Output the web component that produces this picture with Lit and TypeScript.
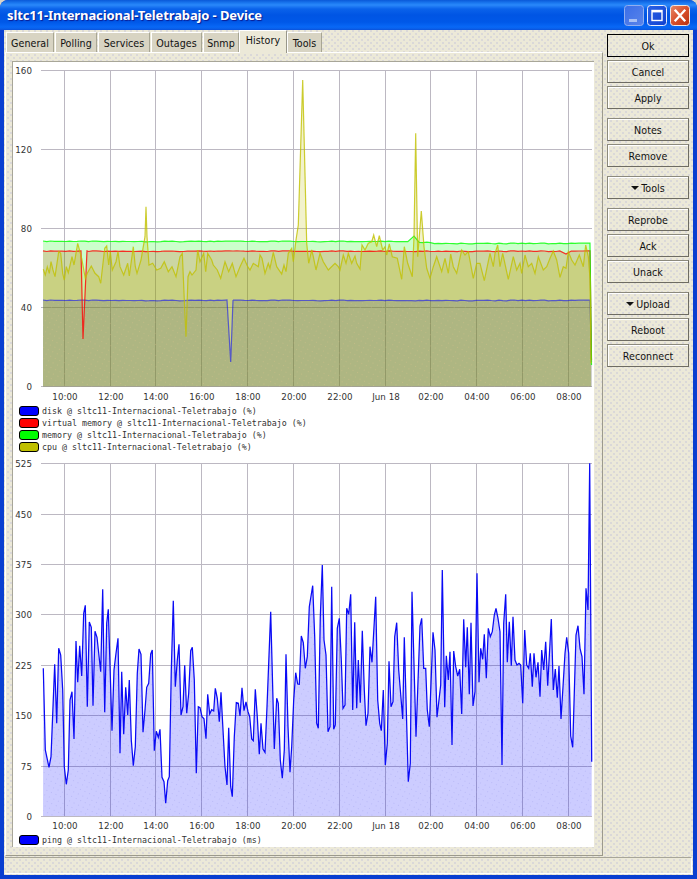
import { LitElement, html, css, svg } from "lit";
import { customElement } from "lit/decorators.js";

type P = [number, number];
const map = (a: number[], ox: number, oy: number): P[] => {
  const r: P[] = [];
  for (let i = 0; i < a.length; i += 2) r.push([ox + a[i] / 3, oy + a[i + 1] / 3]);
  return r;
};
const str = (p: P[]) => p.map(([x, y]) => `${x.toFixed(1)},${y.toFixed(1)}`).join(" ");

const ping: P[] = [
  ...map([40,325,46,570,57,622,63,590,74,313,80,490,86,265,92,285,98,390,103,620,109,673,115,630,120,420,126,395,132,537,138,243,143,367,149,257,155,348,161,160,166,136,172,440,178,186,184,202,189,437,195,214,201,232,212,335,218,88,224,457,230,190,235,148,246,512,252,330,258,280,264,235,270,580,275,335,281,523,287,382,293,465,298,360,304,540,310,617,316,560,322,340,327,267,333,283,339,517,345,450,350,382,356,370,362,282,367,270,373,572,379,514,385,532,390,508,396,652,402,665,407,730,413,662,418,650,424,330,430,122,436,380,442,300,447,253,453,465,459,440,464,316,470,460,476,400,482,272,487,262,493,360,499,640,505,440,510,443,516,470,522,476,528,536,533,403,539,462,545,449,551,453,556,385,562,415,568,485,573,397,579,510,585,620,591,675,596,503,602,680,607,710,613,530,619,428,625,430,630,468,636,383,642,452,648,426,654,455,659,470,665,537,670,542,676,388,682,470,688,583,693,490,699,567,705,577,711,440,722,155,733,567,740,415,745,430,751,600,757,655,763,570,768,283,774,500,780,637,785,560,791,420,797,338,803,372,808,373,814,228,820,248,826,325,832,290,838,140], 30, 560),
  ...map([8,377,14,530,20,790,25,805,31,470,37,315,42,540,48,585,54,815,60,800,65,380,71,808,76,795,82,505,88,475,94,600,99,745,105,735,110,445,116,463,122,403,128,750,134,487,140,745,145,600,151,728,157,512,163,690,168,797,174,760,180,560,186,607,197,410,203,720,209,790,214,812,220,690,226,915,232,850,237,604,243,740,249,725,254,530,260,488,266,630,278,777,283,532,295,965,301,910,306,395,318,830,330,498,335,475,341,625,347,625,352,750,358,800,369,517,375,570,381,772,392,675,397,330,404,742,409,587,415,660,420,575,426,855,431,573,437,620,443,648,449,628,455,762,461,478,467,622,472,502,478,703,483,488,489,738,495,695,501,340,507,667,512,565,518,598,523,523,529,655,535,505,541,530,547,515,553,465,558,445,564,475,570,515,576,915,581,490,587,403,592,607,598,485,604,617,609,470,615,600,621,615,627,610,632,615,638,730,644,510,650,615,656,625,661,580,667,680,672,580,678,652,684,607,690,710,695,570,701,630,707,545,713,677,724,477,730,690,736,627,742,713,747,618,753,777,759,680,765,580,770,532,776,580,782,828,788,862,798,525,804,497,810,565,816,590,822,703,828,385,834,450,839,10,845,905], 310, 460),
];

const cpu: P[] = [
  ...map([40,118,46,135,52,110,58,130,63,95,69,120,75,140,86,65,92,70,98,130,103,150,109,110,115,128,126,80,132,105,143,40,155,85,166,145,172,130,184,108,195,130,206,140,212,160,224,55,230,48,236,105,241,65,247,120,258,95,264,65,270,110,281,135,293,100,298,138,310,50,316,110,321,130,333,90,345,20,348,-70,351,20,357,105,368,100,380,120,392,115,403,95,415,125,426,110,438,140,450,80,457,70,463,210,468,320,474,140,480,125,486,135,498,120,503,60,510,95,521,70,527,125,533,70,545,90,550,105,562,120,572,145,585,95,596,125,607,100,618,140,630,110,642,85,653,110,660,120,670,100,685,110], 30, 230),
  ...map([0,555,6,565,15,610,25,580,30,595,40,547,50,590,65,612,72,585,78,605,85,550,95,535,100,575,108,510,115,465,128,30,140,520,146,580,155,540,160,560,168,600,180,550,190,575,205,600,225,580,235,590,240,600,250,555,258,580,265,550,275,580,285,558,290,580,300,597,306,525,315,540,325,520,335,515,341,495,350,530,358,497,368,540,375,530,380,555,388,522,397,560,412,565,425,628,433,530,443,580,457,620,462,500,467,190,473,560,484,423,492,530,500,595,510,625,520,590,530,560,545,605,555,565,565,610,572,552,580,590,590,610,605,540,615,555,625,545,640,625,650,580,660,580,673,632,690,550,700,590,705,550,713,525,720,590,728,550,745,628,760,560,770,600,780,580,785,610,795,555,805,590,815,580,825,610,835,560,850,600,860,590,870,565,880,543,890,570,900,622,910,590,918,595,925,545,935,570,945,585,958,555,970,590,977,525,985,560,990,625,993,880], 260, 70),
];

const jitter = (i: number) => (Math.sin(i * 12.9898) * 43758.5453) % 1;
const flat = (fn: (x: number) => number, dips: P[], endY: number): P[] => {
  const r: P[] = [];
  let i = 0;
  for (let x = 43; x < 590; x += 3.8) {
    const d = dips.find(([a]) => Math.abs(a - x) < 3.5);
    if (!d) r.push([x, fn(x) + Math.abs(jitter(i)) * 0.8]);
    i++;
  }
  for (const d of dips) r.push(d);
  r.sort((a, b) => a[0] - b[0]);
  r.push([590, fn(589)], [591.5, endY]);
  return r;
};
const withDip = (x1: number, x2: number, x3: number, y: number, base: number, pts: P[]): P[] => {
  const out = pts.filter(([x]) => x < x1 || x > x3);
  out.push([x1, base], [x2, y], [x3, base]);
  return out.sort((a, b) => a[0] - b[0]);
};

const memory = flat((x) => (x < 413 ? 241 : x < 432 ? 242 : 243), [[414, 236]], 365);
const vmem = withDip(81, 83, 87, 339, 250.8, flat(() => 250.8, [[566, 254]], 360));
const disk = withDip(227, 230.7, 233, 362, 300, flat(() => 300, [], 362));

const BASE1 = 386.5;
const BASE2 = 816;
const VX = [65, 111, 156, 202, 248, 294, 340, 386, 431, 477, 523, 569];
const XL = ["10:00", "12:00", "14:00", "16:00", "18:00", "20:00", "22:00", "Jun 18", "02:00", "04:00", "06:00", "08:00"];

const area = (p: P[], base: number) => `43,${base} ${str(p)} ${p[p.length - 1][0].toFixed(1)},${base}`;

const grid = (ys: [string, number][], top: number, base: number, labelY: number) => svg`
  ${ys.map(([, y]) => svg`<line class="g" x1="41" x2="592" y1=${y + 0.5} y2=${y + 0.5}></line>`)}
  ${VX.map((x) => svg`<line class="g" x1=${x - 0.5} x2=${x - 0.5} y1=${top} y2=${base}></line>`)}
  ${ys.map(([t, y]) => svg`<text class="t" x="32" y=${y + 3.5} text-anchor="end">${t}</text>`)}
  ${XL.map((t, i) => svg`<text class="t" x=${VX[i]} y=${labelY} text-anchor="middle">${t}</text>`)}`;

const series: [string, P[]][] = [["#0000ff", disk], ["#ff0000", vmem], ["#00ff00", memory], ["#c0c000", cpu]];

const groups = [["Ok", "Cancel", "Apply"], ["Notes", "Remove"], ["▾Tools"], ["Reprobe", "Ack", "Unack"], ["▾Upload", "Reboot", "Reconnect"]];
const tabs = ["General", "Polling", "Services", "Outages", "Snmp", "History", "Tools"];

@customElement("app-root")
export class AppRoot extends LitElement {
  static styles = css`
    :host { display: block; width: 697px; height: 879px; background: #d8d4c8; font-family: "DejaVu Sans Condensed", "DejaVu Sans", sans-serif; font-stretch: condensed; font-size: 10.6px; letter-spacing: .05px; color: #111; overflow: hidden; }
    .win { height: 879px; box-sizing: border-box; display: flex; flex-direction: column; border-radius: 8px 8px 0 0; overflow: hidden; background: #0a3fd0; }
    .title { height: 30px; flex: none; display: flex; align-items: center; padding: 0 7px; gap: 3px;
      background: linear-gradient(180deg, #0a58d8 0, #1a78f0 3px, #2a88fa 5px, #0a62ea 9px, #0055e4 15px, #0058e8 22px, #0868f6 27px, #0a5ee8 29px, #0a4fd8 30px); }
    .ttext { flex: 1; color: #fff; font: bold 13px "Noto Sans", sans-serif; letter-spacing: -.12px; text-shadow: 1px 1px 1px #0a1a90; white-space: nowrap; }
    .wb { width: 20px; height: 21px; margin-top: 1px; display: block; }
    .body { flex: 1; margin: 0 4px; display: grid; grid-template-columns: 598px 82px; column-gap: 4px; padding-left: 1px; background-color: #ece9d8;
      background-image: radial-gradient(circle at 1px 1px, rgba(170,170,215,.28) .7px, transparent 1px), radial-gradient(circle at 4px 4px, rgba(170,170,215,.28) .7px, transparent 1px);
      background-size: 6px 6px; min-height: 0; }
    .left { display: flex; flex-direction: column; }
    .tabs { height: 23px; display: grid; grid-template-columns: 49px 43px 53px 52px 37px 47px 36px; align-items: end; position: relative; z-index: 1; margin-left: 1px; }
    .tab { height: 20px; box-sizing: border-box; background: #d8d4c3; border-top: 1px solid #fff; border-left: 1px solid #fff; border-right: 1px solid #a8a694; text-align: center; line-height: 20px; margin-right: 1px; margin-bottom: 1px; }
    .tab.on { height: 23px; background: #ece9d8; line-height: 19px; margin-bottom: 0; margin-right: 0; margin-left: -1px; border-right-color: #98968a; }
    .panel { height: 804px; box-sizing: border-box; margin-top: -1px; border-top: 1px solid #fff; border-left: 1px solid #fff; border-right: 1px solid #9c9a8c; border-bottom: 1px solid #9c9a8c; padding: 8px 8px 8px 6px; }
    .chart { height: 786px; box-sizing: border-box; background: #fff; border-top: 1px solid #a8a698; border-left: 1px solid #a8a698; display: flex; flex-direction: column; }
    svg.plot { display: block; flex: none; width: 580px; }
    .p1 { height: 343px; }
    .p2 { height: 381px; }
    .g { stroke: #bcb8c2; stroke-width: 1; }
    .t { font: 8.7px "DejaVu Sans", sans-serif; fill: #333; }
    .legend { margin-left: 6px; }
    .row { height: 12px; display: flex; align-items: center; gap: 3px; font: 8.3px/12px "DejaVu Sans Mono", monospace; font-stretch: normal; letter-spacing: 0; color: #333; white-space: pre; }
    .sw { width: 18px; height: 8px; border: 1px solid #000; border-radius: 3px; flex: none; }
    .blue { background: #0000ff; } .red { background: #ff0000; } .green { background: #00ff00; } .olive { background: #c0c000; }
    .side { padding-top: 4px; display: flex; flex-direction: column; gap: 9px; }
    .grp { display: flex; flex-direction: column; gap: 3px; }
    .btn { height: 23px; box-sizing: border-box; border: 1px solid #8c8a7c; border-right-color: #6e6c62; border-bottom-color: #6e6c62; box-shadow: inset 1px 1px #fff; display: flex; align-items: center; justify-content: center; gap: 2px; }
    .btn.def { border: 1px solid #000; box-shadow: none; }
    .tri { width: 8px; height: 4px; display: block; }
    .wrapfoot { flex: none; margin: 0 4px 4px; padding-left: 1px; height: 19px; background-color: #ece9d8;
      background-image: radial-gradient(circle at 1px 1px, rgba(170,170,215,.28) .7px, transparent 1px), radial-gradient(circle at 4px 4px, rgba(170,170,215,.28) .7px, transparent 1px); background-size: 6px 6px; }
    .sb { height: 17px; margin-top: 1px; margin-right: 1px; box-sizing: border-box; border-top: 1px solid #a8a698; border-right: 1px solid #fff; border-bottom: 1px solid #fff; }
  `;

  private plot1() {
    return html`<svg class="plot p1" viewBox="13 62 580 343">
      <defs><pattern id="d1" width="5" height="5" patternUnits="userSpaceOnUse" patternTransform="rotate(25)"><rect x="1" y="1" width="1" height="1" fill="#e8c890" opacity=".3"></rect></pattern></defs>
      ${grid([["160", 70], ["120", 149], ["80", 228], ["40", 307], ["0", 386]], 70, 387, 400)}
      ${series.map(([c, p]) => svg`<polygon points=${area(p, BASE1)} fill=${c} fill-opacity=".2"></polygon>`)}
      <polygon points=${area(disk, BASE1)} fill="url(#d1)"></polygon>
      ${series.map(([c, p]) => svg`<polyline points=${str(p)} fill="none" stroke=${c} stroke-width="1.2" stroke-opacity=${c === "#0000ff" ? 0.55 : 0.8}></polyline>`)}
    </svg>`;
  }

  private plot2() {
    return html`<svg class="plot p2" viewBox="13 453 580 381">
      <defs><pattern id="d2" width="5" height="5" patternUnits="userSpaceOnUse" patternTransform="rotate(25)"><rect x="1" y="1" width="1" height="1" fill="#a8a8f0" opacity=".5"></rect></pattern></defs>
      ${grid([["525", 463], ["450", 514], ["375", 564], ["300", 614], ["225", 665], ["150", 715], ["75", 766], ["0", 816]], 463, 816, 829)}
      <polygon points=${area(ping, BASE2)} fill="#0000ff" fill-opacity=".2"></polygon>
      <polygon points=${area(ping, BASE2)} fill="url(#d2)"></polygon>
      <polyline points=${str(ping)} fill="none" stroke="#0a0af5" stroke-width="1.25"></polyline>
    </svg>`;
  }

  render() {
    const leg = (c: string, t: string) => html`<div class="row"><span class="sw ${c}"></span><span>${t}</span></div>`;
    const host = "sltc11-Internacional-Teletrabajo";
    return html`<div class="win">
      <div class="title">
        <span class="ttext">sltc11-Internacional-Teletrabajo - Device</span>
        <svg class="wb" viewBox="0 0 20 21"><defs><linearGradient id="bm" x1="0" y1="0" x2="1" y2="1"><stop offset="0" stop-color="#3a6ee8"></stop><stop offset="1" stop-color="#5a84ea"></stop></linearGradient></defs><rect x=".5" y=".5" width="19" height="20" rx="3" fill="url(#bm)" stroke="#90aef0"></rect><rect x="5" y="14" width="8" height="3" fill="#a8c0f4"></rect></svg>
        <svg class="wb" viewBox="0 0 20 21"><defs><linearGradient id="bx" x1="0" y1="0" x2="1" y2="1"><stop offset="0" stop-color="#2a62e6"></stop><stop offset="1" stop-color="#1040d0"></stop></linearGradient></defs><rect x=".5" y=".5" width="19" height="20" rx="3" fill="url(#bx)" stroke="#e8eefc"></rect><rect x="5" y="5.5" width="10" height="10" fill="none" stroke="#fff" stroke-width="1.4"></rect><rect x="5" y="5" width="10" height="2.4" fill="#fff"></rect></svg>
        <svg class="wb" viewBox="0 0 20 21"><defs><linearGradient id="bc" x1="0" y1="0" x2="1" y2="1"><stop offset="0" stop-color="#e88a68"></stop><stop offset=".5" stop-color="#d8502c"></stop><stop offset="1" stop-color="#b83010"></stop></linearGradient></defs><rect x=".5" y=".5" width="19" height="20" rx="3" fill="url(#bc)" stroke="#f0e8e4"></rect><path d="M5.5 5.5 L14.5 15.5 M14.5 5.5 L5.5 15.5" stroke="#fff" stroke-width="2.3" stroke-linecap="square"></path></svg>
      </div>
      <div class="body">
        <div class="left">
          <div class="tabs">${tabs.map((t) => html`<div class="tab ${t === "History" ? "on" : ""}">${t}</div>`)}</div>
          <div class="panel"><div class="chart">
            ${this.plot1()}
            <div class="legend">
              ${leg("blue", `disk @ ${host} (%)`)}
              ${leg("red", `virtual memory @ ${host} (%)`)}
              ${leg("green", `memory @ ${host} (%)`)}
              ${leg("olive", `cpu @ ${host} (%)`)}
            </div>
            ${this.plot2()}
            <div class="legend">${leg("blue", `ping @ ${host} (ms)`)}</div>
          </div></div>
        </div>
        <div class="side">
          ${groups.map((g) => html`<div class="grp">${g.map((b) => html`<div class="btn ${b === "Ok" ? "def" : ""}">
            ${b.startsWith("▾") ? html`<svg class="tri" viewBox="0 0 8 4"><path d="M0 0H8L4 4Z" fill="#111"></path></svg>` : ""}${b.replace("▾", "")}</div>`)}</div>`)}
        </div>
      </div>
      <div class="wrapfoot"><div class="sb"></div></div>
    </div>`;
  }
}
